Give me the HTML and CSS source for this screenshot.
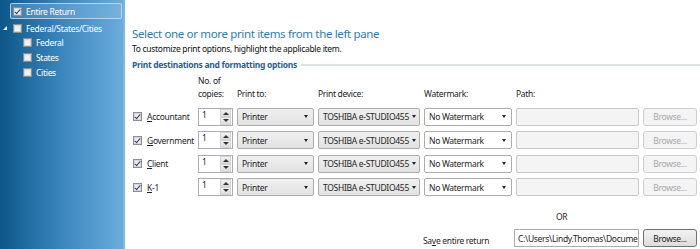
FILE: index.html
```html
<!DOCTYPE html>
<html>
<head>
<meta charset="utf-8">
<link rel="stylesheet" href="styles.css">
</head>
<body>
<div class="app">
  <aside class="tree">
    <div class="node selected">
      <span class="cb checked"></span><span class="label">Entire Return</span>
    </div>
    <div class="node parent">
      <span class="expander"></span><span class="cb"></span><span class="label">Federal/States/Cities</span>
    </div>
    <div class="node child"><span class="cb"></span><span class="label">Federal</span></div>
    <div class="node child"><span class="cb"></span><span class="label">States</span></div>
    <div class="node child"><span class="cb"></span><span class="label">Cities</span></div>
  </aside>
  <main class="main">
    <h1 class="title">Select one or more print items from the left pane</h1>
    <p class="subtitle">To customize print options, highlight the applicable item.</p>
    <div class="section-head"><span>Print destinations and formatting options</span><span class="rule"></span></div>
    <div class="grid">
      <div class="hdr c2">No. of<br>copies:</div>
      <div class="hdr c3">Print to:</div>
      <div class="hdr c4">Print device:</div>
      <div class="hdr c5">Watermark:</div>
      <div class="hdr c6">Path:</div>

      <label class="rowlabel"><span class="cb checked"></span><span><u>A</u>ccountant</span></label>
      <div class="spin"><span class="val">1</span><span class="btns"><span class="up"></span><span class="down"></span></span></div>
      <div class="sel gray"><span>Printer</span><span class="arrow"></span></div>
      <div class="sel gray"><span>TOSHIBA e-STUDIO455</span><span class="arrow"></span></div>
      <div class="sel white"><span>No Watermark</span><span class="arrow"></span></div>
      <div class="path disabled"></div>
      <div class="btn disabled">Browse...</div>

      <label class="rowlabel"><span class="cb checked"></span><span><u>G</u>overnment</span></label>
      <div class="spin"><span class="val">1</span><span class="btns"><span class="up"></span><span class="down"></span></span></div>
      <div class="sel gray"><span>Printer</span><span class="arrow"></span></div>
      <div class="sel gray"><span>TOSHIBA e-STUDIO455</span><span class="arrow"></span></div>
      <div class="sel white"><span>No Watermark</span><span class="arrow"></span></div>
      <div class="path disabled"></div>
      <div class="btn disabled">Browse...</div>

      <label class="rowlabel"><span class="cb checked"></span><span><u>C</u>lient</span></label>
      <div class="spin"><span class="val">1</span><span class="btns"><span class="up"></span><span class="down"></span></span></div>
      <div class="sel gray"><span>Printer</span><span class="arrow"></span></div>
      <div class="sel gray"><span>TOSHIBA e-STUDIO455</span><span class="arrow"></span></div>
      <div class="sel white"><span>No Watermark</span><span class="arrow"></span></div>
      <div class="path disabled"></div>
      <div class="btn disabled">Browse...</div>

      <label class="rowlabel"><span class="cb checked"></span><span><u>K</u>-1</span></label>
      <div class="spin"><span class="val">1</span><span class="btns"><span class="up"></span><span class="down"></span></span></div>
      <div class="sel gray"><span>Printer</span><span class="arrow"></span></div>
      <div class="sel gray"><span>TOSHIBA e-STUDIO455</span><span class="arrow"></span></div>
      <div class="sel white"><span>No Watermark</span><span class="arrow"></span></div>
      <div class="path disabled"></div>
      <div class="btn disabled">Browse...</div>

      <div class="or">OR</div>

      <div class="savelabel">Sa<u>v</u>e entire return</div>
      <div class="path filled">C:\Users\Lindy.Thomas\Docume</div>
      <div class="btn savebtn">Browse...</div>
    </div>
  </main>
</div>
</body>
</html>
```
FILE: styles.css
```css
* { box-sizing: border-box; }
html, body { margin: 0; padding: 0; }
body {
  width: 700px;
  height: 249px;
  overflow: hidden;
  font-family: "Noto Sans", "Open Sans", sans-serif;
  font-size: 8.5px;
  letter-spacing: -0.3px;
  color: #1e1e1e;
  background: #fff;
}
.app {
  display: flex;
  height: 249px;
}
.tree {
  width: 125px;
  flex: none;
  background: linear-gradient(to right, #0c5689 0%, #3a86bd 50%, #6aaddd 100%);
  border-right: 2px solid #79b8e6;
  padding-top: 3px;
  padding-right: 1px;
  color: #fff;
}
.node {
  display: flex;
  align-items: center;
  height: 15px;
}
.node .label { margin-left: 4px; white-space: nowrap; }
.node.selected {
  margin-left: 10px;
  padding-left: 2px;
  border: 1px solid rgba(200, 225, 245, 0.8);
  border-radius: 2px;
  background: rgba(140, 190, 230, 0.35);
  height: 16px;
  margin-bottom: 2px;
}
.node.parent { padding-left: 3px; height: 14px; }
.node.child { padding-left: 23px; height: 15px; }
.expander {
  width: 0; height: 0;
  border-left: 4px solid transparent;
  border-bottom: 4px solid #fff;
  margin-right: 6px;
}
.cb {
  display: inline-block;
  position: relative;
  width: 9px;
  height: 9px;
  flex: none;
  border: 1px solid #8f8f8f;
  background: linear-gradient(#e8e8e8, #f8f8f8);
  box-shadow: inset 0 0 0 1px #d6d6d6;
}
.cb.checked::after {
  content: "";
  position: absolute;
  left: 2px;
  top: 0px;
  width: 2px;
  height: 5px;
  border-right: 1.5px solid #2e3a78;
  border-bottom: 1.5px solid #2e3a78;
  transform: rotate(40deg);
}
.main {
  flex: 1;
  padding: 26px 0 0 7px;
}
.title {
  margin: 0;
  font-weight: 400;
  font-size: 11.5px;
  letter-spacing: -0.35px;
  line-height: 16px;
  color: #2d7bbd;
}
.subtitle {
  margin: 1px 0 0;
  line-height: 11px;
  color: #111;
}
.section-head {
  display: flex;
  align-items: center;
  margin-top: 5px;
  font-weight: 700;
  line-height: 11px;
  color: #1f5f9c;
}
.section-head .rule {
  flex: 1;
  height: 2px;
  margin-left: 4px;
  background: #dde3e8;
}
.grid {
  display: grid;
  grid-template-columns: 62px 35px 77px 102px 88px 123px 54px;
  column-gap: 4px;
  margin-top: 4px;
  align-items: center;
}
.hdr {
  line-height: 13px;
  align-self: end;
  color: #222;
  margin-bottom: 5px;
}
.hdr.c2 { grid-column: 2; }
.rowlabel {
  grid-column: 1;
  display: flex;
  align-items: center;
  padding-left: 1px;
  height: 23.5px;
}
.rowlabel .cb { margin-right: 5px; }
.spin, .sel, .path, .btn {
  height: 18px;
  display: flex;
  align-items: center;
}
.spin {
  border: 1px solid #abadb3;
  background: #fff;
  justify-content: space-between;
  padding-left: 3px;
  align-items: flex-start;
}
.spin .val { line-height: 12px; }
.spin .btns {
  display: flex;
  flex-direction: column;
  width: 11px;
  height: 16px;
  margin: 0 1px 0 0;
}
.spin .up, .spin .down {
  flex: 1;
  background: linear-gradient(#f2f2f2, #dcdcdc);
  border: 1px solid #d4d4d4;
  position: relative;
}
.spin .up::after, .spin .down::after {
  content: "";
  position: absolute;
  left: 2px;
  width: 0; height: 0;
  border-left: 3px solid transparent;
  border-right: 3px solid transparent;
}
.spin .up::after { top: 2px; border-bottom: 3px solid #333; }
.spin .down::after { top: 1px; border-top: 3px solid #333; }
.sel {
  border: 1px solid #acacac;
  border-radius: 2px;
  justify-content: space-between;
  padding: 0 5px 0 4px;
  white-space: nowrap;
}
.sel.gray { background: linear-gradient(#f0f0f0, #e2e2e2); }
.sel.white { background: #fff; }
.sel .arrow {
  width: 0; height: 0;
  border-left: 2.5px solid transparent;
  border-right: 2.5px solid transparent;
  border-top: 3px solid #222;
  margin-left: 3px;
  flex: none;
}
.path {
  border: 1px solid #c9c9c9;
  border-radius: 2px;
  background: #f4f4f4;
}
.path.filled {
  grid-column: 6;
  background: #fff;
  border-color: #abadb3;
  border-radius: 0;
  padding-left: 3px;
  overflow: hidden;
  white-space: nowrap;
  margin-left: -2px;
  margin-top: 7px;
  width: 125px;
}
.btn {
  justify-content: center;
  border: 1px solid #707070;
  border-radius: 3px;
  background: linear-gradient(#f2f2f2, #dddddd);
}
.btn.disabled {
  border-color: #cfcfcf;
  background: #f4f4f4;
  color: #a8a8a8;
}
.savebtn { grid-column: 7; margin-top: 7px; }
.or {
  grid-column: 6;
  padding-left: 40px;
  margin-top: 12px;
  line-height: 11px;
}
.savelabel {
  grid-column: 5;
  align-self: end;
  line-height: 11px;
  margin-left: -1px;
  margin-bottom: 1px;
}
```
